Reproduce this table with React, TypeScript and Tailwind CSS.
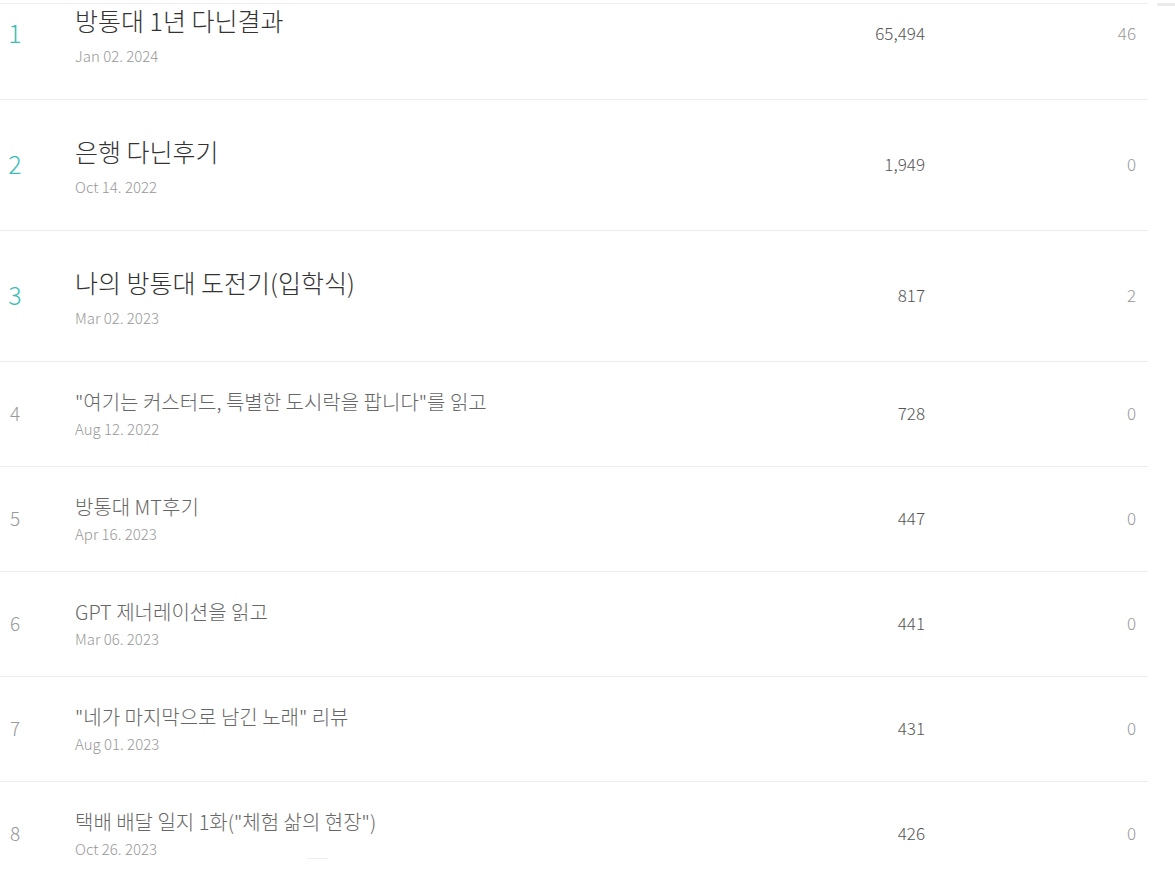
const posts = [
  { title: '방통대 1년 다닌결과', date: 'Jan 02. 2024', views: '65,494', comments: '46' },
  { title: '은행 다닌후기', date: 'Oct 14. 2022', views: '1,949', comments: '0' },
  { title: '나의 방통대 도전기(입학식)', date: 'Mar 02. 2023', views: '817', comments: '2' },
  { title: '"여기는 커스터드, 특별한 도시락을 팝니다"를 읽고', date: 'Aug 12. 2022', views: '728', comments: '0' },
  { title: '방통대 MT후기', date: 'Apr 16. 2023', views: '447', comments: '0' },
  { title: 'GPT 제너레이션을 읽고', date: 'Mar 06. 2023', views: '441', comments: '0' },
  { title: '"네가 마지막으로 남긴 노래" 리뷰', date: 'Aug 01. 2023', views: '431', comments: '0' },
  { title: '택배 배달 일지 1화("체험 삶의 현장")', date: 'Oct 26. 2023', views: '426', comments: '0' },
];

function Row({ rank, post }: { rank: number; post: (typeof posts)[number] }) {
  const top = rank <= 3;
  return (
    <li
      className={`flex items-center border-b border-[#ececec] ${top ? 'h-[131px]' : 'h-[105px]'}`}
    >
      <div
        className={`mb-[2px] w-[30px] text-center font-light ${
          top ? 'text-[25px] text-[#3dbdb5]' : 'text-[19px] text-[#999]'
        }`}
      >
        {rank}
      </div>
      <div className={`ml-[45px] flex flex-1 flex-col ${top ? 'mt-[2px]' : 'mt-0'}`}>
        <span
          className={
            top
              ? 'text-[25px] font-light leading-[32px] text-[#333]'
              : 'text-[20px] font-light leading-[26px] text-[#666]'
          }
        >
          {post.title}
        </span>
        <span
          className={`text-[15px] font-light leading-[20px] text-[#999] ${
            top ? 'mt-[10px]' : 'mt-[4px]'
          }`}
        >
          {post.date}
        </span>
      </div>
      <div className="mb-[2px] w-[150px] text-right text-[17px] font-light text-[#555]">
        {post.views}
      </div>
      <div className="mb-[2px] w-[223px] pr-[12px] text-right text-[17px] font-light text-[#999]">
        {post.comments}
      </div>
    </li>
  );
}

export default function App() {
  return (
    <div
      className="relative h-[878px] overflow-hidden bg-white"
      style={{ fontFamily: '"Noto Sans CJK KR", "Noto Sans", sans-serif' }}
    >
      <ul className="-mt-[31px] w-[1148px]">
        {posts.map((p, i) => (
          <Row key={i} rank={i + 1} post={p} />
        ))}
      </ul>
      {/* header edge and scroll stub */}
      <div className="absolute left-0 top-[3px] h-px w-[1148px] bg-[#efefef]" />
      <div className="absolute right-0 top-[3px] h-[3px] w-[18px] bg-[#ebebeb]" />
      <div className="absolute left-[307px] top-[858px] h-px w-[21px] bg-[#eeeeee]" />
    </div>
  );
}
